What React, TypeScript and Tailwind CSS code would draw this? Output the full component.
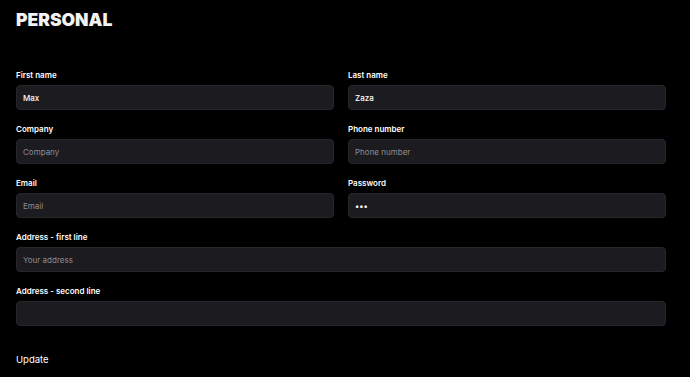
import React from "react";

type FieldProps = {
  label: string;
  value?: string;
  placeholder?: string;
  type?: string;
};

const Field: React.FC<FieldProps> = ({ label, value, placeholder, type }) => (
  <label className="flex flex-col">
    <span className="text-[8px] leading-[12px] font-semibold text-white mb-[4px]">
      {label}
    </span>
    <input
      type={type ?? "text"}
      defaultValue={value}
      placeholder={placeholder}
      className="h-[25px] w-full rounded-[4px] border border-[#26262b] bg-[#1b1b20] px-[6px] text-[8px] font-medium text-white placeholder:font-normal placeholder:text-[#8d8d93] outline-none"
    />
  </label>
);

export default function App() {
  return (
    <div
      className="min-h-screen bg-black text-white pl-[16px] pr-[24px] pt-[10px]"
      style={{ fontFamily: "Inter, 'Noto Sans', sans-serif" }}
    >
      <h1 className="text-[17.5px] leading-[20px] font-black text-[#f2f2f2]">
        PERSONAL
      </h1>

      <form className="mt-[39px]" onSubmit={(e) => e.preventDefault()}>
        <div className="grid grid-cols-2 gap-x-[14px] gap-y-[13px]">
          <Field label="First name" value="Max" />
          <Field label="Last name" value="Zaza" />
          <Field label="Company" placeholder="Company" />
          <Field label="Phone number" placeholder="Phone number" />
          <Field label="Email" placeholder="Email" />
          <Field label="Password" value="123" type="password" />
          <div className="col-span-2">
            <Field label="Address - first line" placeholder="Your address" />
          </div>
          <div className="col-span-2">
            <Field label="Address - second line" />
          </div>
        </div>

        <button type="submit" className="mt-[27px] text-[9.5px] leading-[14px] text-white">
          Update
        </button>
      </form>
    </div>
  );
}
